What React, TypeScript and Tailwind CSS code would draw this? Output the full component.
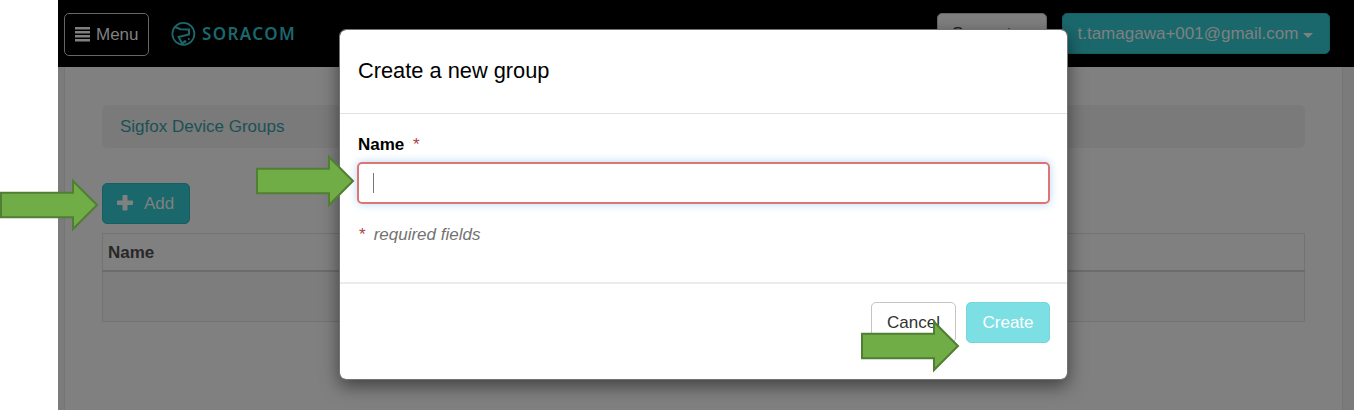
function Arrow({ className }: { className: string }) {
  return (
    <svg className={`absolute h-[54px] w-[100px] ${className}`} viewBox="0 0 100 54" aria-hidden="true">
      <path d="M1 14.7H73V3L97 27L73 51V39.3H1Z" fill="#70ad47" stroke="#507e32" strokeWidth="2" />
    </svg>
  );
}

function Logo() {
  return (
    <div className="ml-[22px] mt-[21px] flex h-[26px] items-center text-[#1b676c]">
      <svg className="h-[26px] w-[26px]" viewBox="0 0 26 26" fill="none" stroke="currentColor" strokeWidth="1.8" aria-hidden="true">
        <circle cx="12.4" cy="12.8" r="11" />
        <path d="M4 6L9.5 8.2L18 8.4V13.4L7.6 16L11.2 22.8L14 20" strokeWidth="2" />
        <circle cx="17.8" cy="18" r="1.1" fill="currentColor" stroke="none" />
        <circle cx="14.2" cy="20.5" r="1.2" fill="currentColor" stroke="none" />
      </svg>
      <span className="mb-px ml-[5px] font-['Noto_Sans',sans-serif] text-[17px] font-semibold leading-none tracking-[1.4px]">SORACOM</span>
    </div>
  );
}

function Header() {
  return (
    <header className="flex h-[67px] items-start bg-black pl-[6px] pr-[24px]">
      <button className="mt-[13px] flex h-[43px] w-[85px] items-center rounded-[5px] border border-[#666] pl-[10px] text-[#808080]">
        <svg className="mb-[1px] mr-[6px] h-[15px] w-[15px]" viewBox="0 0 15 15" fill="currentColor" aria-hidden="true">
          <path d="M0 0H15V2.5H0ZM0 4H15V6.5H0ZM0 8H15V10.5H0ZM0 12H15V14.5H0Z" />
        </svg>
        Menu
      </button>
      <Logo />
      <button className="ml-auto mt-[13px] flex h-[41px] w-[110px] items-center rounded-[5px] border border-[#666] bg-[#808080] pl-[14px] text-[#1a1a1a]">
        Support
        <span className="ml-[5px] border-x-[5px] border-t-[5px] border-x-transparent border-t-[#1a1a1a]" />
      </button>
      <button className="ml-[15px] mt-[13px] flex h-[41px] w-[268px] items-center rounded-[5px] border border-[#175e63] bg-[#1b686c] pl-[14.5px] text-[#808080]">
        t.tamagawa+001@gmail.com
        <span className="ml-[5px] mt-[3px] border-x-[5px] border-t-[5px] border-x-transparent border-t-[#808080]" />
      </button>
    </header>
  );
}

function DeviceGroups() {
  return (
    <main className="mx-[6px] h-[343px] w-[1279px] border-x border-[#757575] bg-[#808080] px-[37px] pt-[38px]">
      <nav className="flex h-[43px] items-center rounded-[5px] bg-[#7a7a7a] pl-[18px] text-[#1a5155]">Sigfox Device Groups</nav>
      <button className="mt-[35px] flex h-[41px] w-[88px] items-center rounded-[5px] border border-[#175e63] bg-[#1b686c] pl-[14px] text-[#808080]">
        <svg className="mb-[1px] mr-[11px] h-[16px] w-[16px]" viewBox="0 0 16 16" fill="currentColor" aria-hidden="true">
          <path d="M6.2 0H9.8Q10.5 0 10.5 0.7V5.5H15.3Q16 5.5 16 6.2V9.3Q16 10 15.3 10H10.5V14.8Q10.5 15.5 9.8 15.5H6.2Q5.5 15.5 5.5 14.8V10H0.7Q0 10 0 9.3V6.2Q0 5.5 0.7 5.5H5.5V0.7Q5.5 0 6.2 0Z" />
        </svg>
        Add
      </button>
      <table className="mt-[9px] w-full border-collapse border border-[#737373]">
        <thead>
          <tr className="h-[37px] border-b-2 border-[#6c6c6c]">
            <th className="pl-[5px] pt-[2px] text-left font-bold text-[#282828]">Name</th>
          </tr>
        </thead>
        <tbody>
          <tr className="h-[51px] bg-[#7d7d7d]">
            <td />
          </tr>
        </tbody>
      </table>
    </main>
  );
}

function GroupDialog() {
  return (
    <section
      role="dialog"
      className="absolute left-[339px] top-[29px] flex h-[351px] w-[729px] flex-col rounded-[7px] border border-[#737373] bg-white bg-clip-padding text-black shadow-[0_6px_18px_rgba(0,0,0,0.5)]"
    >
      <h4 className="flex h-[84px] items-center border-b border-[#e2e2e2] pb-[2px] pl-[18px] text-[21.8px]">Create a new group</h4>
      <div className="flex h-[168px] flex-col px-[17px] pt-[19px]">
        <label className="h-[29px] pl-px font-bold leading-[24px]">
          Name <span className="ml-[4px] font-normal text-[#a94442]">*</span>
        </label>
        <div className="flex h-[42px] shrink-0 items-center rounded-[5px] border-2 border-[#de7572] pl-[14px] shadow-[0_0_8px_rgba(102,175,233,0.5)]">
          <span className="h-[20px] w-px bg-[#777]" />
        </div>
        <p className="mt-[19px] pl-[2px] leading-[24px] text-[#737373]">
          <span className="mr-[8px] text-[#a94442]">*</span>
          <em>required fields</em>
        </p>
      </div>
      <footer className="flex flex-1 items-start justify-end border-t-2 border-[#ebebeb] pr-[17px] pt-[18px]">
        <button className="h-[41px] w-[85px] rounded-[5px] border border-[#c4c4c4] text-[#333]">Cancel</button>
        <button className="ml-[10px] h-[41px] w-[84px] rounded-[5px] border border-[#73d7dc] bg-[#7bdfe4] text-white">Create</button>
      </footer>
    </section>
  );
}

export default function App() {
  return (
    <div className="relative h-[410px] w-[1354px] overflow-hidden bg-white font-['Liberation_Sans',Arial,sans-serif] text-[17px] leading-[24px]">
      <div className="ml-[58px] h-[410px] bg-[#7b7b7b]">
        <Header />
        <DeviceGroups />
      </div>
      <GroupDialog />
      <Arrow className="left-0 top-[178px]" />
      <Arrow className="left-[256px] top-[154px]" />
      <Arrow className="left-[861px] top-[319px]" />
    </div>
  );
}
